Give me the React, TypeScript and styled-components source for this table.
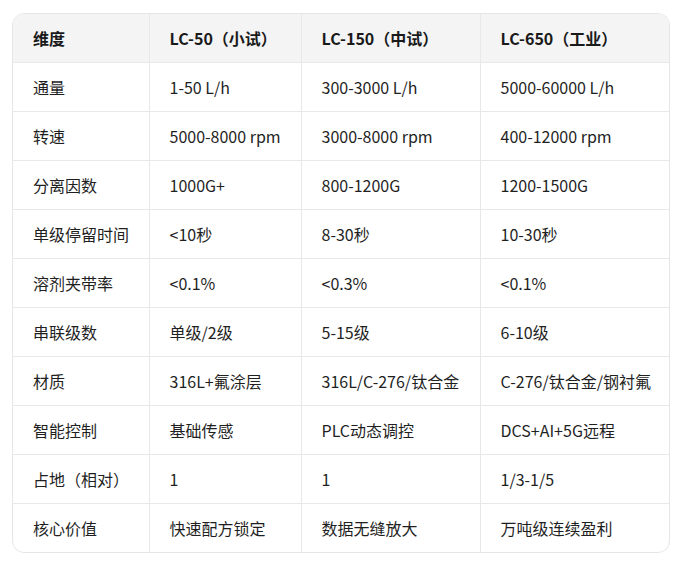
import React from "react";
import styled, { createGlobalStyle } from "styled-components";

const Global = createGlobalStyle`
  html, body { margin: 0; padding: 0; background: #ffffff; }
  body { font-family: "Noto Sans CJK SC", "Noto Sans", sans-serif; color: #1f1f1f; }
`;

const Page = styled.div`
  padding: 13px 21px 0 12px;
`;

const Card = styled.div`
  width: 658px;
  box-sizing: border-box;
  border: 1px solid #e6e6e6;
  border-radius: 12px;
  overflow: hidden;
  background: #ffffff;
`;

const Table = styled.table`
  width: 100%;
  border-collapse: collapse;
  table-layout: fixed;
`;

const Col = styled.col<{ $w?: number }>`
  width: ${(p) => (p.$w ? `${p.$w}px` : "auto")};
`;

const Th = styled.th`
  text-align: left;
  font-weight: 700;
  font-size: 16px;
  line-height: 20px;
  padding: 14px 20px;
  background: #f4f4f4;
  color: #1a1a1a;
  border-bottom: 1px solid #e8e8e8;
  border-left: 1px solid #e8e8e8;
  white-space: nowrap;
  &:first-child { border-left: none; }
`;

const Td = styled.td<{ $last?: boolean }>`
  text-align: left;
  font-weight: 400;
  font-size: 16px;
  line-height: 20px;
  padding: 14px 20px;
  color: #1f1f1f;
  border-bottom: ${(p) => (p.$last ? "none" : "1px solid #e8e8e8")};
  border-left: 1px solid #e8e8e8;
  white-space: nowrap;
  &:first-child { border-left: none; }
`;

const headers = ["维度", "LC-50（小试）", "LC-150（中试）", "LC-650（工业）"];
const rows: string[][] = [
  ["通量", "1-50 L/h", "300-3000 L/h", "5000-60000 L/h"],
  ["转速", "5000-8000 rpm", "3000-8000 rpm", "400-12000 rpm"],
  ["分离因数", "1000G+", "800-1200G", "1200-1500G"],
  ["单级停留时间", "<10秒", "8-30秒", "10-30秒"],
  ["溶剂夹带率", "<0.1%", "<0.3%", "<0.1%"],
  ["串联级数", "单级/2级", "5-15级", "6-10级"],
  ["材质", "316L+氟涂层", "316L/C-276/钛合金", "C-276/钛合金/钢衬氟"],
  ["智能控制", "基础传感", "PLC动态调控", "DCS+AI+5G远程"],
  ["占地（相对）", "1", "1", "1/3-1/5"],
  ["核心价值", "快速配方锁定", "数据无缝放大", "万吨级连续盈利"],
];

export default function App() {
  return (
    <>
      <Global />
      <Page>
        <Card>
          <Table>
            <colgroup>
              <Col $w={136} />
              <Col $w={152} />
              <Col $w={179} />
              <Col />
            </colgroup>
            <thead>
              <tr>
                {headers.map((h) => (
                  <Th key={h}>{h}</Th>
                ))}
              </tr>
            </thead>
            <tbody>
              {rows.map((r, i) => (
                <tr key={r[0]}>
                  {r.map((c, j) => (
                    <Td key={j} $last={i === rows.length - 1}>
                      {c}
                    </Td>
                  ))}
                </tr>
              ))}
            </tbody>
          </Table>
        </Card>
      </Page>
    </>
  );
}
